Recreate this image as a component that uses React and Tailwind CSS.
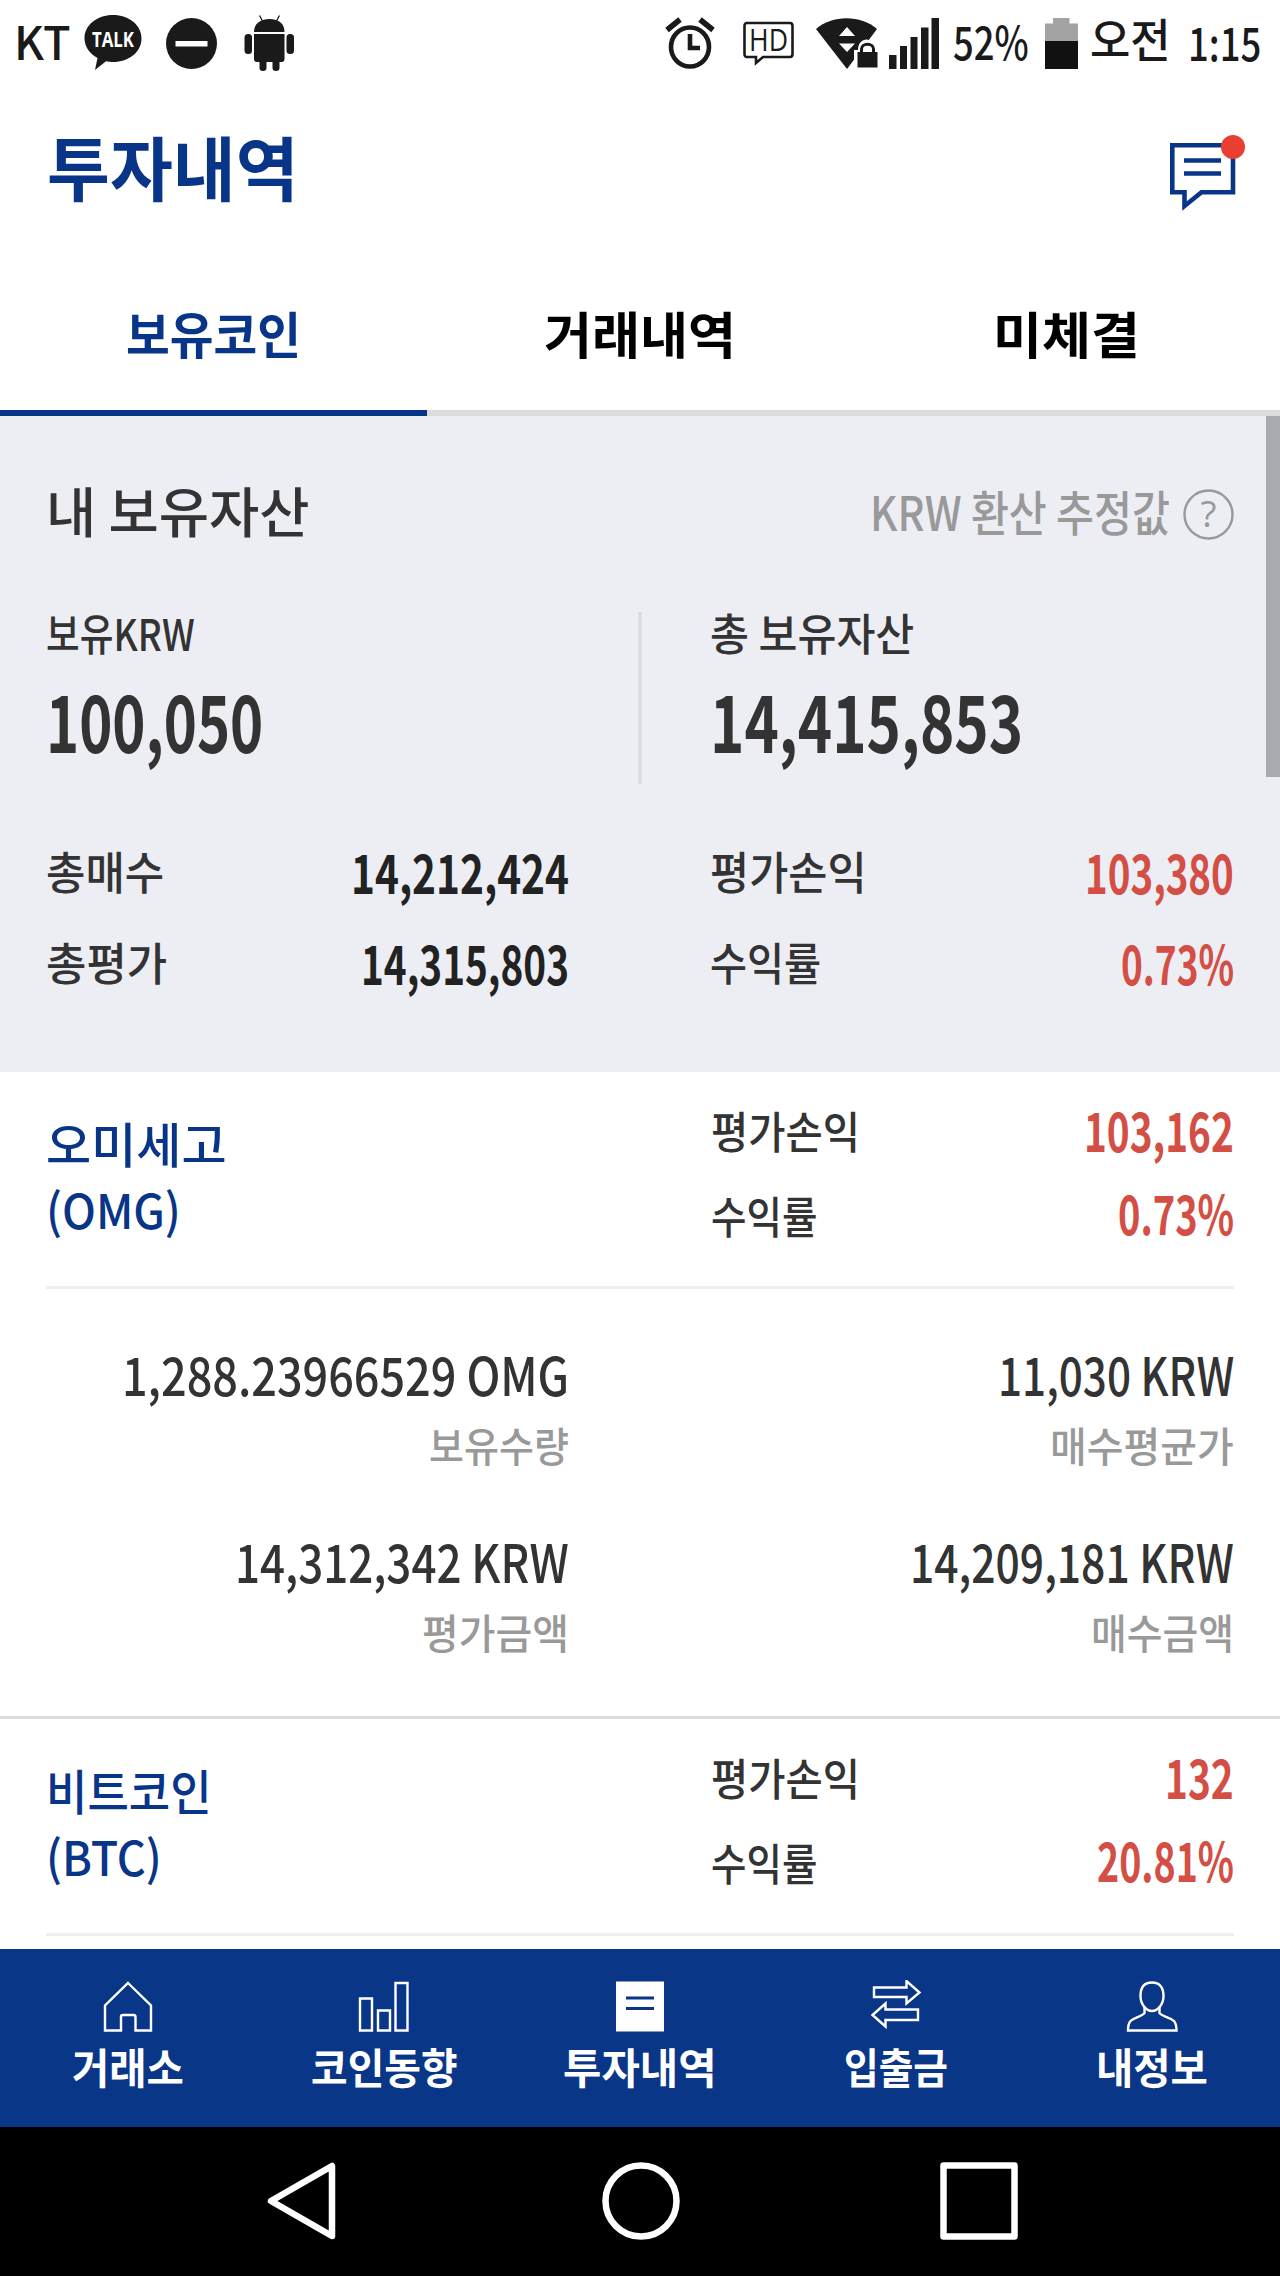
import { useLayoutEffect, useRef, useState } from "react";

// Single line of text squeezed (or stretched) to a fixed width
const Label = ({ w, className = "", children }) => {
  const ref = useRef(null);
  const [scale, setScale] = useState(1);

  useLayoutEffect(() => {
    if (ref.current?.offsetWidth) {
      setScale(w / ref.current.offsetWidth);
    }
  }, [w, children]);

  return (
    <span className={"block shrink-0 " + className} style={{ width: w }}>
      <span
        ref={ref}
        className="inline-block origin-left whitespace-nowrap align-top"
        style={{ transform: `scaleX(${scale})` }}
      >
        {children}
      </span>
    </span>
  );
};

const coins = [
  {
    name: "오미세고",
    nameWidth: 181,
    symbol: "(OMG)",
    symbolWidth: 135,
    profit: "103,162",
    profitWidth: 150,
    rate: "0.73%",
    rateWidth: 116,
    details: [
      { value: "1,288.23966529 OMG", valueWidth: 447, title: "보유수량", titleWidth: 140 },
      { value: "11,030 KRW", valueWidth: 236, title: "매수평균가", titleWidth: 184 },
      { value: "14,312,342 KRW", valueWidth: 334, title: "평가금액", titleWidth: 147 },
      { value: "14,209,181 KRW", valueWidth: 324, title: "매수금액", titleWidth: 143 },
    ],
  },
  {
    name: "비트코인",
    nameWidth: 166,
    symbol: "(BTC)",
    symbolWidth: 116,
    profit: "132",
    profitWidth: 69,
    rate: "20.81%",
    rateWidth: 137,
    details: [],
  },
];

const StatusBar = () => (
  <div className="flex h-[86px] items-center pl-[14px] pr-[19px] text-[46px] leading-none font-medium text-[#1a1a1a]">
    <Label w={57} className="mb-1.5">
      KT
    </Label>
    <svg className="ml-[13px] shrink-0" width="58" height="56" viewBox="0 0 58 56">
      <path
        d="M29 0C13 0 0.500 10 0.500 23.500C0.500 32 6 39 13.500 43L11 55L22 46.200C24 46.700 27 47 29 47C45 47 57.500 37 57.500 23.500C57.500 10 45 0 29 0Z"
        fill="#1a1a1a"
      />
      <text x="8" y="31.500" textLength="42" lengthAdjust="spacingAndGlyphs" fontSize="21" fontWeight="700" fontFamily="Open Sans, sans-serif" fill="#fff">
        TALK
      </text>
    </svg>
    <svg className="ml-6 shrink-0" width="51" height="51" viewBox="0 0 51 51">
      <circle cx="25.500" cy="25.500" r="25.500" fill="#1a1a1a" />
      <rect x="9.500" y="23" width="32" height="5.500" fill="#fff" />
    </svg>
    <svg className="ml-[27px] shrink-0" width="51" height="56" viewBox="0 0 51 56" fill="#1a1a1a">
      <path d="M15.500 0.500L18.500 6M35.500 0.500L32.500 6" stroke="#1a1a1a" strokeWidth="1.300" />
      <path d="M10 17C10 9 16 4 25.500 4S40.500 9 40.500 17Z" />
      <path d="M10 19H40.500V44C40.500 46 39.500 47 37.500 47H35.500V53Q35.500 56 32 56T28.500 53V47H22.500V53Q22.500 56 19 56T15.500 53V47H13C11 47 10 46 10 44Z" />
      <rect x="0.500" y="19" width="7.500" height="20" rx="3.500" />
      <rect x="42.500" y="19" width="7.500" height="20" rx="3.500" />
    </svg>

    <svg className="ml-auto shrink-0" width="50" height="52" viewBox="0 0 50 52" fill="none" stroke="#1a1a1a">
      <ellipse cx="25" cy="30" rx="19" ry="19.500" strokeWidth="4.600" />
      <path d="M25 17V31H35" strokeWidth="4.600" />
      <path d="M2 13L15 2.500M48 13L35 2.500" strokeWidth="5.500" />
    </svg>
    <svg className="ml-[28px] shrink-0 overflow-visible" width="51" height="44" viewBox="0 0 51 44" fill="none">
      <path
        d="M4 2H47Q49.500 2 49.500 5V33Q49.500 36 47 36H20L13 42V36H4Q1.500 36 1.500 33V5Q1.500 2 4 2Z"
        stroke="#1a1a1a"
        strokeWidth="2.600"
      />
      <text x="6" y="30" textLength="39" lengthAdjust="spacingAndGlyphs" fontSize="31" fontWeight="500" fontFamily="Open Sans, sans-serif" fill="#1a1a1a">
        HD
      </text>
    </svg>
    <svg className="ml-[22px] shrink-0" width="62" height="51" viewBox="0 0 62 51">
      <path d="M0 11C16 -3.500 45 -3.500 61 11L31 51Z" fill="#1a1a1a" />
      <path d="M23 18L31 9L39 18ZM23 25.500H39L31 34Z" fill="#fff" />
      <path d="M38 51V32H42C42 18 59 18 59 32H62V51Z" fill="#fff" />
      <rect x="41.500" y="34" width="20" height="15.500" fill="#1a1a1a" />
      <path d="M45.500 35V31C45.500 24.500 57.500 24.500 57.500 31V35" stroke="#1a1a1a" strokeWidth="3" fill="none" />
    </svg>
    <svg className="ml-[11px] shrink-0" width="51" height="51" viewBox="0 0 51 51" fill="#1a1a1a">
      <rect x="0" y="37" width="7.500" height="14" />
      <rect x="11" y="28" width="7" height="23" />
      <rect x="21.500" y="19" width="7" height="32" />
      <rect x="32" y="9.500" width="7.500" height="41.500" />
      <rect x="42.500" y="0" width="7.500" height="51" />
    </svg>
    <Label w={76} className="ml-[13px] mb-1.5">
      52%
    </Label>
    <svg className="ml-[16px] shrink-0" width="33" height="51" viewBox="0 0 33 51">
      <path d="M0 5.500H8V0H24.500V5.500H33V24H0Z" fill="#a3a3a3" />
      <rect y="23" width="33" height="28" fill="#111" />
    </svg>
    <Label w={81} className="ml-[12px] mb-3">
      오전
    </Label>
    <Label w={73} className="ml-[17px] mb-1">
      1:15
    </Label>
  </div>
);

const Header = () => (
  <div className="flex h-[164px] items-start justify-between pt-[49px] pl-[47px] pr-[34px]">
    <Label w={252} className="-mt-0.5 text-[70px] leading-[66px] font-bold text-[#083588]">
      투자내역
    </Label>
    <svg width="76" height="77" viewBox="0 0 76 77">
      <path d="M2.300 10.300H63V57.300H31.500L14.500 71V57.300H2.300Z" fill="none" stroke="#083588" strokeWidth="4.600" />
      <path d="M14 25.500H51M14 38.500H51" stroke="#083588" strokeWidth="4.600" />
      <circle cx="63" cy="12" r="12" fill="#e93e30" />
    </svg>
  </div>
);

const Tabs = () => (
  <div className="flex h-[166px] text-[50px] leading-[50px] font-bold text-black">
    <div className="flex w-[427px] flex-col items-center justify-center border-b-[6px] border-[#083588] pt-1 text-[#083588]">
      <Label w={175}>보유코인</Label>
    </div>
    <div className="flex w-[426px] flex-col items-center justify-center border-b-[6px] border-[#dcdcdc] pt-1">
      <Label w={192}>거래내역</Label>
    </div>
    <div className="flex w-[427px] flex-col items-center justify-center border-b-[6px] border-[#dcdcdc] pt-1">
      <Label w={147}>미체결</Label>
    </div>
  </div>
);

const Summary = () => (
  <div className="h-[656px] bg-[#edeef4] px-[46px] pt-16 text-[#333]">
    <div className="flex h-[60px] items-center">
      <Label w={264} className="text-[54px] leading-[60px] font-medium">
        내 보유자산
      </Label>
      <Label w={300} className="ml-auto text-[48px] leading-[60px] font-medium text-[#999]">
        KRW 환산 추정값
      </Label>
      <svg className="ml-[13px] mt-2 overflow-visible" width="51" height="51" viewBox="0 0 51 51">
        <circle cx="25.500" cy="25.500" r="24" fill="none" stroke="#999" strokeWidth="2.400" />
        <text x="25.500" y="38" textAnchor="middle" fontSize="37" fontFamily="Open Sans, sans-serif" fill="#999">
          ?
        </text>
      </svg>
    </div>

    <div className="mt-[72px] flex h-[172px]">
      <div className="w-[592px]">
        <Label w={149} className="text-[44px] leading-[40px] font-medium">
          보유KRW
        </Label>
        <Label w={217} className="mt-[27px] text-[79px] leading-[80px] font-bold">
          100,050
        </Label>
      </div>
      <div className="w-1 bg-[#dcdde1]" />
      <div className="pl-[68px]">
        <Label w={204} className="text-[44px] leading-[40px] font-medium">
          총 보유자산
        </Label>
        <Label w={313} className="mt-[27px] text-[79px] leading-[80px] font-bold">
          14,415,853
        </Label>
      </div>
    </div>

    <div className="mt-[57px] grid grid-cols-[523px_524px] justify-between gap-y-[31px] text-[45px] leading-[60px] font-medium">
      <div className="flex justify-between">
        <Label w={118}>총매수</Label>
        <Label w={218} className="text-[54px] font-bold text-[#222]">
          14,212,424
        </Label>
      </div>
      <div className="flex justify-between">
        <Label w={157}>평가손익</Label>
        <Label w={149} className="text-[54px] font-bold text-[#d34f45]">
          103,380
        </Label>
      </div>
      <div className="flex justify-between">
        <Label w={121}>총평가</Label>
        <Label w={208} className="text-[54px] font-bold text-[#222]">
          14,315,803
        </Label>
      </div>
      <div className="flex justify-between">
        <Label w={111}>수익률</Label>
        <Label w={113} className="text-[54px] font-bold text-[#d34f45]">
          0.73%
        </Label>
      </div>
    </div>
  </div>
);

const Coin = ({ coin }) => (
  <div className="px-[46px] font-medium text-[#333]">
    <div className="flex h-[217px] justify-between border-b-[3px] border-[#eee]">
      <div className="pt-[37px] text-[48px] leading-[66px] text-[#083588]">
        <Label w={coin.nameWidth}>{coin.name}</Label>
        <Label w={coin.symbolWidth}>{coin.symbol}</Label>
      </div>
      <div className="w-[523px] pt-[15px] text-[44px] leading-[83px]">
        <div className="flex justify-between">
          <Label w={149} className="mt-0.5">
            평가손익
          </Label>
          <Label w={coin.profitWidth} className="h-[83px] text-[54px] font-bold text-[#d34f45]">
            {coin.profit}
          </Label>
        </div>
        <div className="-mt-0.5 flex justify-between">
          <Label w={106} className="mt-1">
            수익률
          </Label>
          <Label w={coin.rateWidth} className="text-[54px] font-bold text-[#d34f45]">
            {coin.rate}
          </Label>
        </div>
      </div>
    </div>
    {coin.details.length > 0 && (
      <div className="grid h-[427px] grid-cols-[523px_523px] content-start justify-between gap-y-14 pt-[54px]">
        {coin.details.map((item) => (
          <div key={item.title} className="flex h-[131px] flex-col items-end leading-[60px]">
            <Label w={item.valueWidth} className="text-[53px]">
              {item.value}
            </Label>
            <Label w={item.titleWidth} className="mt-[11px] text-[41px] text-[#999]">
              {item.title}
            </Label>
          </div>
        ))}
      </div>
    )}
  </div>
);

const NavItem = ({ title, w, children }) => (
  <div className="flex flex-1 flex-col items-center pt-[31px]">
    <svg width="52" height="53" viewBox="0 0 52 53" fill="none" stroke="#fff" strokeWidth="2.400">
      {children}
    </svg>
    <Label w={w} className="mt-[13px] text-[42px] leading-[40px] font-bold text-white">
      {title}
    </Label>
  </div>
);

const BottomNav = () => (
  <div className="flex h-[178px] bg-[#0a3688]">
    <NavItem title="거래소" w={112}>
      <path d="M26 3L49 25.500V50.500H33.500V37Q33.500 35 31.500 35H21Q19 35 19 37V50.500H3V25.500Z" />
    </NavItem>
    <NavItem title="코인동향" w={147}>
      <path d="M2 18.500H14V50.500H2ZM20 30.500H32V50.500H20ZM37.500 3H49.500V50.500H37.500Z" />
    </NavItem>
    <NavItem title="투자내역" w={154}>
      <rect x="2" y="1.500" width="48" height="50" fill="#fff" stroke="none" />
      <path d="M12 18H40M12 28.500H40" stroke="#0a3688" strokeWidth="3.200" />
    </NavItem>
    <NavItem title="입출금" w={104}>
      <path d="M4 7.500H36.500V1L49.500 12.500L36.500 23.500V17H4ZM48 29.500H15.500V23.500L2.500 35L15.500 46.500V40H48Z" />
    </NavItem>
    <NavItem title="내정보" w={112}>
      <path d="M26 2.500C18 2.500 14.500 8 14.500 16C14.500 24 20 31 26 31S37.500 24 37.500 16C37.500 8 34 2.500 26 2.500Z" />
      <path d="M18.500 27V33C15 37 8 37.500 4.500 41C2.500 43.500 2 47 2 50.500H50.500C50.500 47 50 43.500 48 41C44.500 37.500 37 37 33.500 33V27" />
    </NavItem>
  </div>
);

const SystemNav = () => (
  <div className="flex h-[149px] items-center justify-between bg-black pb-[1px] pl-[267px] pr-[262px]">
    <svg width="78" height="78" viewBox="0 0 78 78" fill="none" stroke="#fff" strokeWidth="6.500">
      <path d="M65 4V74L4 39Z" strokeLinejoin="round" />
    </svg>
    <svg className="-ml-1" width="78" height="78" viewBox="0 0 78 78" fill="none" stroke="#fff" strokeWidth="6.500">
      <circle cx="39" cy="39" r="35.500" />
    </svg>
    <svg width="78" height="78" viewBox="0 0 78 78" fill="none" stroke="#fff" strokeWidth="6.500">
      <rect x="3.500" y="3.500" width="71" height="71" strokeLinejoin="round" />
    </svg>
  </div>
);

const App = () => {
  return (
    <div className="flex h-[2276px] w-[1280px] flex-col overflow-hidden bg-white font-['Noto_Sans_CJK_KR',sans-serif]">
      <StatusBar />
      <Header />
      <Tabs />
      <div className="relative h-[1533px] overflow-hidden">
        <Summary />
        {coins.map((coin, index) => (
          <div key={coin.name} className={index > 0 ? "border-t-[3px] border-[#dcdcdc]" : ""}>
            <Coin coin={coin} />
          </div>
        ))}
        <div className="absolute top-0 right-0 h-[361px] w-[14px] bg-[#a9aab0]" />
      </div>
      <BottomNav />
      <SystemNav />
    </div>
  );
};

export default App;
